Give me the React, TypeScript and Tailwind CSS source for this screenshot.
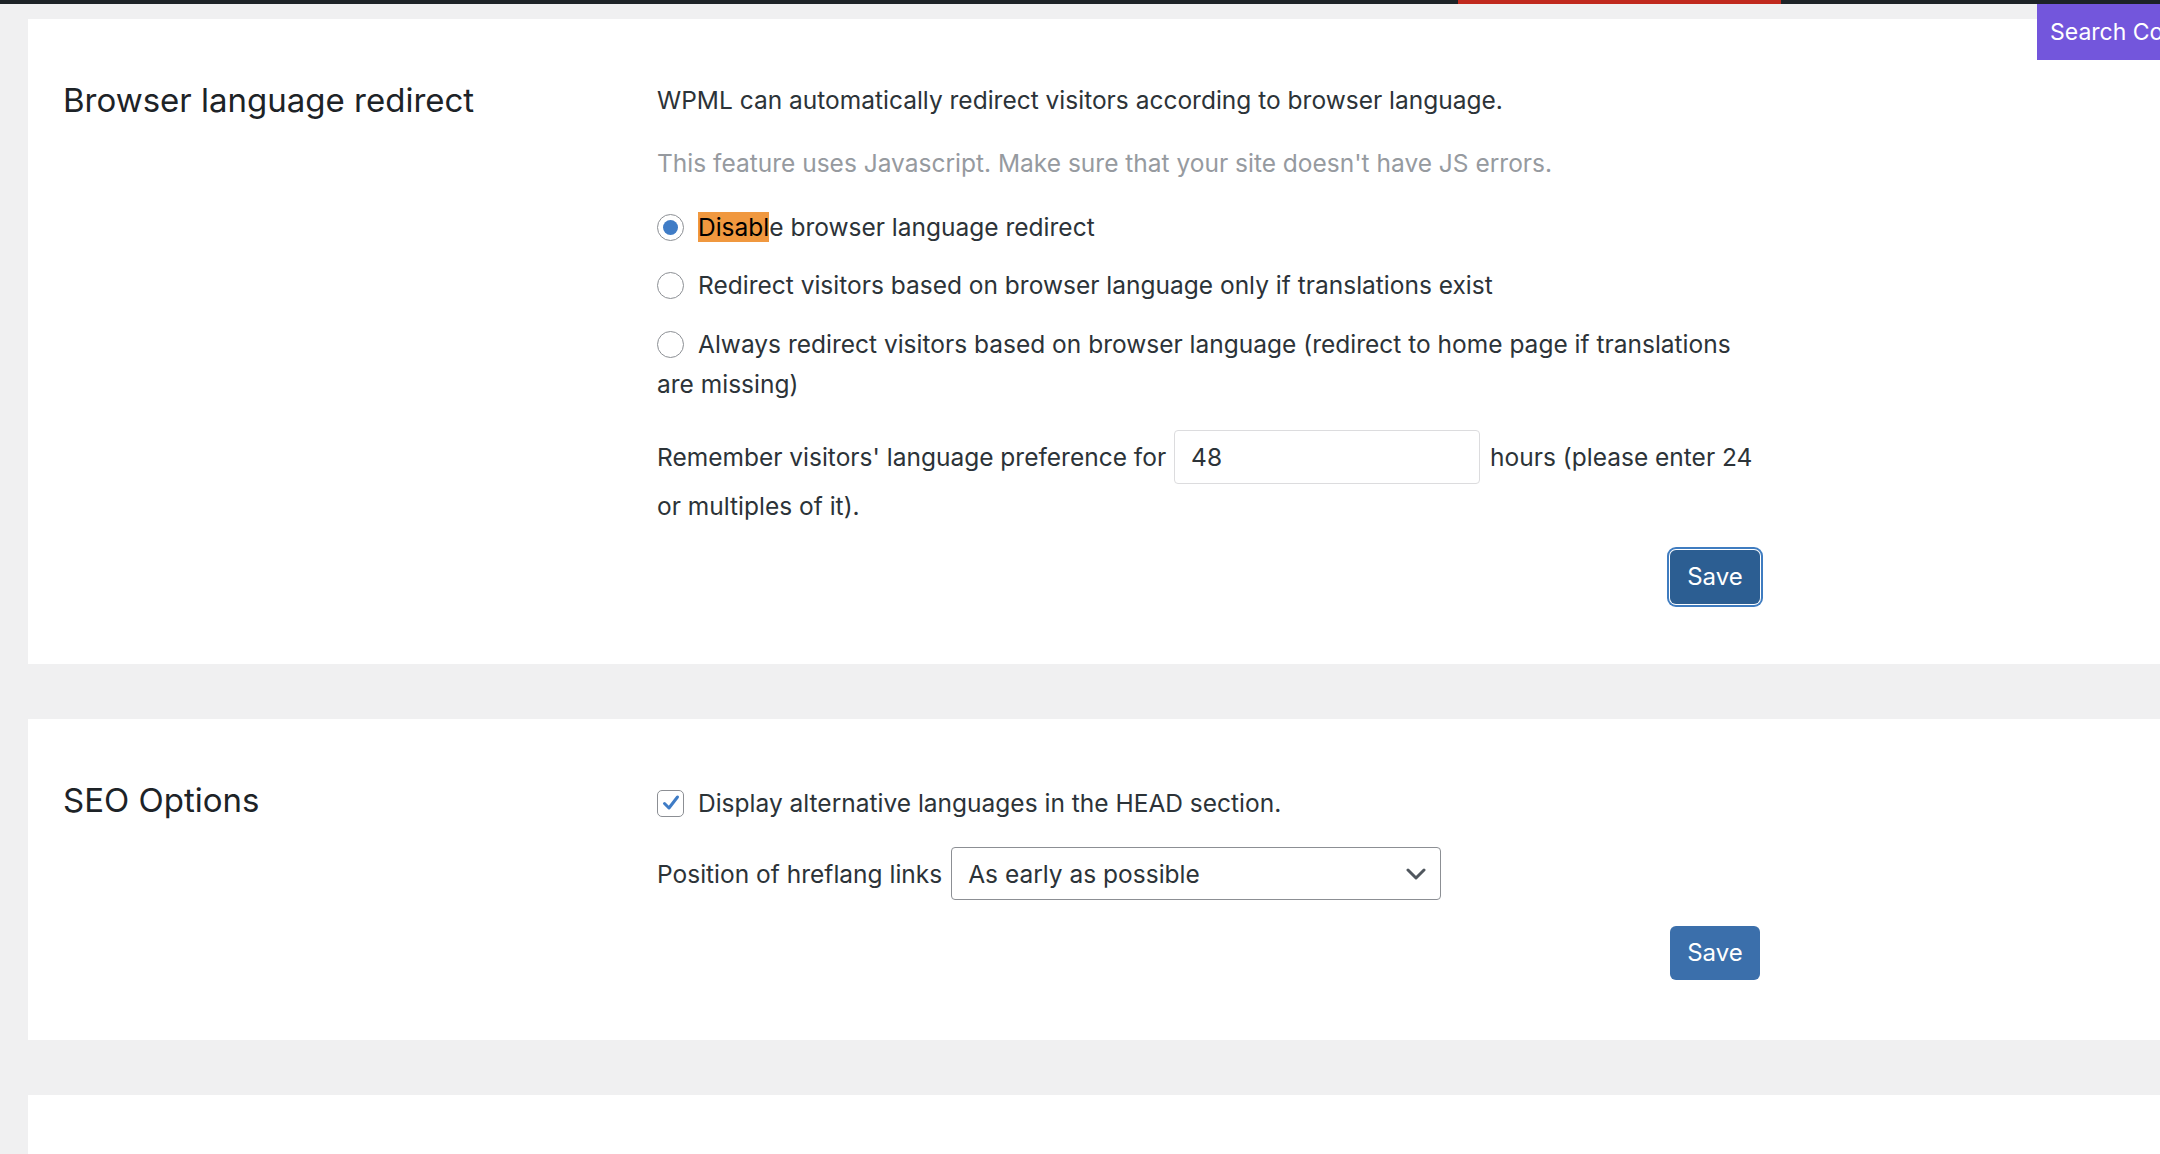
import React from "react";

function Radio({ checked }: { checked?: boolean }) {
  return (
    <span className="inline-flex h-[27px] w-[27px] shrink-0 items-center justify-center rounded-full border border-[#8c8f94] bg-white align-middle">
      {checked && <span className="h-[15px] w-[15px] rounded-full bg-[#3f7cc6]" />}
    </span>
  );
}

function SaveButton({ focused }: { focused?: boolean }) {
  return (
    <button
      className={
        focused
          ? "h-[54px] w-[90px] rounded-[6px] bg-[#2c5e92] text-[24px] text-white ring-2 ring-[#3f7cc0] ring-offset-1 ring-offset-white"
          : "h-[54px] w-[90px] rounded-[6px] bg-[#3b6fab] text-[24px] text-white"
      }
    >
      Save
    </button>
  );
}

export default function App() {
  return (
    <div
      className="relative min-h-screen w-full overflow-hidden bg-[#f0f0f1] text-[#2c3338]"
      style={{ fontFamily: "Inter, 'Noto Sans', sans-serif" }}
    >
      {/* admin bar strip */}
      <div className="flex h-[4px] bg-[#1d2327]">
        <div className="ml-[1458px] h-full w-[323px] bg-[#c0291d]" />
      </div>

      {/* Search Console tab */}
      <div className="absolute left-[2037px] top-[4px] flex h-[56px] w-[200px] items-center whitespace-nowrap bg-[#7356dc] pl-[13px] text-[23px] text-white">
        Search Console
      </div>

      <div className="pl-[28px] pt-[15px]">
        {/* Card 1 */}
        <section className="flex bg-white pb-[60px] pl-[35px] pt-[61px]">
          <h2 className="w-[594px] shrink-0 text-[33px] leading-[40px] text-[#1d2327]">
            Browser language redirect
          </h2>
          <div className="w-[1103px] text-[24.5px] leading-[40px]">
            <p className="whitespace-nowrap">
              WPML can automatically redirect visitors according to browser language.
            </p>
            <p className="mt-[23px] whitespace-nowrap text-[#969a9f]">
              This feature uses Javascript. Make sure that your site doesn't have JS errors.
            </p>
            <div className="mt-[24px] flex items-center gap-[14px]">
              <Radio checked />
              <span className="whitespace-nowrap">
                <span className="bg-[#f0983f] text-black">Disabl</span>e browser language redirect
              </span>
            </div>
            <div className="mt-[18px] flex items-center gap-[14px]">
              <Radio />
              <span className="whitespace-nowrap">
                Redirect visitors based on browser language only if translations exist
              </span>
            </div>
            <div className="mt-[19px]">
              <div className="flex items-center gap-[14px]">
                <Radio />
                <span className="whitespace-nowrap">
                  Always redirect visitors based on browser language (redirect to home page if translations
                </span>
              </div>
              <div>are missing)</div>
            </div>
            <div className="mt-[26px] flex h-[54px] items-center whitespace-nowrap">
              <span>Remember visitors' language preference for</span>
              <div className="ml-[8px] flex h-[54px] w-[306px] items-center rounded-[4px] border border-[#dcdcde] pl-[16px]">
                48
              </div>
              <span className="ml-[10px]">hours (please enter 24</span>
            </div>
            <p className="mt-[2px]">or multiples of it).</p>
            <div className="mt-[24px] flex justify-end">
              <SaveButton focused />
            </div>
          </div>
        </section>

        {/* Card 2 */}
        <section className="mt-[55px] flex bg-white pb-[60px] pl-[35px] pt-[61px]">
          <h2 className="w-[594px] shrink-0 text-[33px] leading-[40px] text-[#1d2327]">SEO Options</h2>
          <div className="w-[1103px] text-[24.5px] leading-[40px]">
            <div className="mt-[3px] flex items-center gap-[14px]">
              <span className="flex h-[27px] w-[27px] items-center justify-center rounded-[5px] border border-[#8c8f94] bg-white">
                <svg width="20" height="20" viewBox="0 0 20 20" fill="none">
                  <path d="M3.5 10.5 L8 15 L16.5 4" stroke="#3f7cc6" strokeWidth="3" strokeLinecap="round" strokeLinejoin="round" />
                </svg>
              </span>
              <span className="whitespace-nowrap">Display alternative languages in the HEAD section.</span>
            </div>
            <div className="mt-[24px] flex items-center whitespace-nowrap">
              <span>Position of hreflang links</span>
              <div className="ml-[9px] flex h-[53px] w-[490px] items-center justify-between rounded-[4px] border border-[#8c8f94] pl-[16px] pr-[14px]">
                <span>As early as possible</span>
                <svg width="20" height="12" viewBox="0 0 20 12" fill="none">
                  <path d="M2 2 L10 10 L18 2" stroke="#50575e" strokeWidth="3" strokeLinecap="round" strokeLinejoin="round" />
                </svg>
              </div>
            </div>
            <div className="mt-[26px] flex justify-end">
              <SaveButton />
            </div>
          </div>
        </section>

        {/* Card 3 */}
        <section className="mt-[55px] h-[200px] bg-white" />
      </div>
    </div>
  );
}
